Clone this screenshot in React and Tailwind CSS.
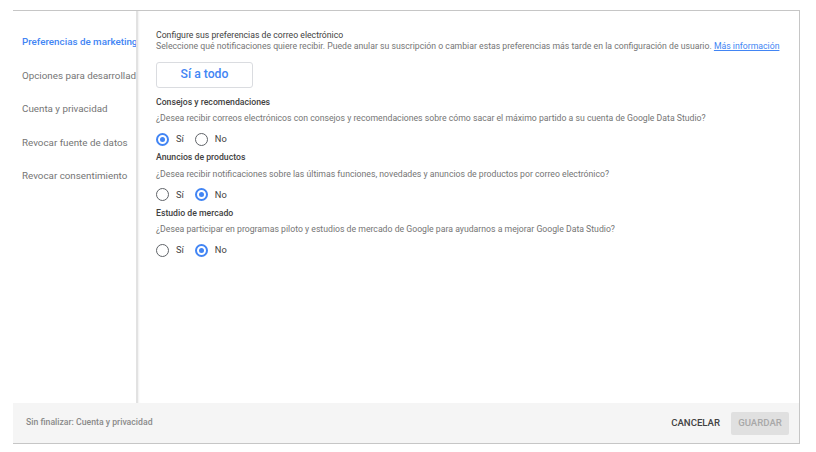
import React from "react";

function Radio({ checked }) {
  return checked ? (
    <span className="block w-[13px] h-[13px] rounded-full border-[2px] border-[#4285f4] flex items-center justify-center shrink-0">
      <span className="block w-[5px] h-[5px] rounded-full bg-[#4285f4]" />
    </span>
  ) : (
    <span className="block w-[13px] h-[13px] rounded-full border-[1.5px] border-[#5f6368] shrink-0" />
  );
}

function RadioRow({ yes, className }) {
  return (
    <div className={"flex items-center h-[14px] " + className}>
      <Radio checked={yes} />
      <span className="ml-[7px] text-[9.3px] text-[#424242] leading-none">Sí</span>
      <span className="ml-[11px] block">
        <Radio checked={!yes} />
      </span>
      <span className="ml-[7px] text-[9.3px] text-[#424242] leading-none">No</span>
    </div>
  );
}

export default function App() {
  const side = [
    "Preferencias de marketing",
    "Opciones para desarrolladores",
    "Cuenta y privacidad",
    "Revocar fuente de datos",
    "Revocar consentimiento",
  ];
  return (
    <div className="w-[816px] h-[452px] bg-white pt-[10px] pl-[13px] font-['Roboto',sans-serif] overflow-hidden">
      <div className="w-[787px] h-[434px] border-t border-r-[1.5px] border-b border-[#c6c6c6] flex flex-col">
        <div className="flex flex-1 min-h-0">
          <div className="w-[125px] shrink-0 border-r-2 border-[#e2e2e2] pt-[24px] pl-[9px] overflow-hidden">
            {side.map((s, i) => (
              <div
                key={s}
                className={
                  "h-[33.5px] flex items-start whitespace-nowrap leading-[13px] " +
                  (i === 0 ? "text-[9.8px] text-[#4285f4] font-medium" : "text-[9.8px] text-[#757575]")
                }
              >
                {s}
              </div>
            ))}
          </div>
          <div className="flex-1 pl-[18px] pt-[19px] shadow-[inset_2px_0_2px_-1px_rgba(0,0,0,0.06)]">
            <div className="text-[8.7px] leading-[11px] text-[#424242]">
              Configure sus preferencias de correo electrónico
            </div>
            <div className="text-[8.7px] leading-[11px] text-[#757575] whitespace-nowrap">
              Seleccione qué notificaciones quiere recibir. Puede anular su suscripción o cambiar estas preferencias más tarde en la configuración de usuario.{" "}
              <span className="text-[#4285f4] underline">Más información</span>
            </div>
            <button className="mt-[9.5px] w-[97px] h-[26px] border border-[#dadce0] rounded-[3px] text-[#4285f4] text-[12.2px] font-medium flex items-center justify-center">
              Sí a todo
            </button>

            <div className="mt-[9px] text-[8.7px] leading-[11px] text-[#424242] font-medium">
              Consejos y recomendaciones
            </div>
            <div className="mt-[5.5px] text-[8.7px] leading-[11px] text-[#757575] whitespace-nowrap">
              ¿Desea recibir correos electrónicos con consejos y recomendaciones sobre cómo sacar el máximo partido a su cuenta de Google Data Studio?
            </div>
            <RadioRow yes={true} className="mt-[8px]" />

            <div className="mt-[6px] text-[8.7px] leading-[11px] text-[#424242] font-medium">
              Anuncios de productos
            </div>
            <div className="mt-[5.5px] text-[8.7px] leading-[11px] text-[#757575] whitespace-nowrap">
              ¿Desea recibir notificaciones sobre las últimas funciones, novedades y anuncios de productos por correo electrónico?
            </div>
            <RadioRow yes={false} className="mt-[8px]" />

            <div className="mt-[6px] text-[8.7px] leading-[11px] text-[#424242] font-medium">
              Estudio de mercado
            </div>
            <div className="mt-[5.5px] text-[8.7px] leading-[11px] text-[#757575] whitespace-nowrap">
              ¿Desea participar en programas piloto y estudios de mercado de Google para ayudarnos a mejorar Google Data Studio?
            </div>
            <RadioRow yes={false} className="mt-[8px]" />
          </div>
        </div>
        <div className="h-[40px] shrink-0 bg-[#f5f5f5] flex items-center pl-[13px] pr-[10px]">
          <span className="text-[8.7px] font-medium text-[#8a8a8a]">
            Sin finalizar: Cuenta y privacidad
          </span>
          <span className="ml-auto text-[9.6px] font-medium text-[#424242]">CANCELAR</span>
          <span className="ml-[11px] w-[58px] h-[23px] bg-[#e0e0e0] rounded-[2px] text-[9.6px] font-medium text-[#a8a8a8] flex items-center justify-center">
            GUARDAR
          </span>
        </div>
      </div>
    </div>
  );
}
